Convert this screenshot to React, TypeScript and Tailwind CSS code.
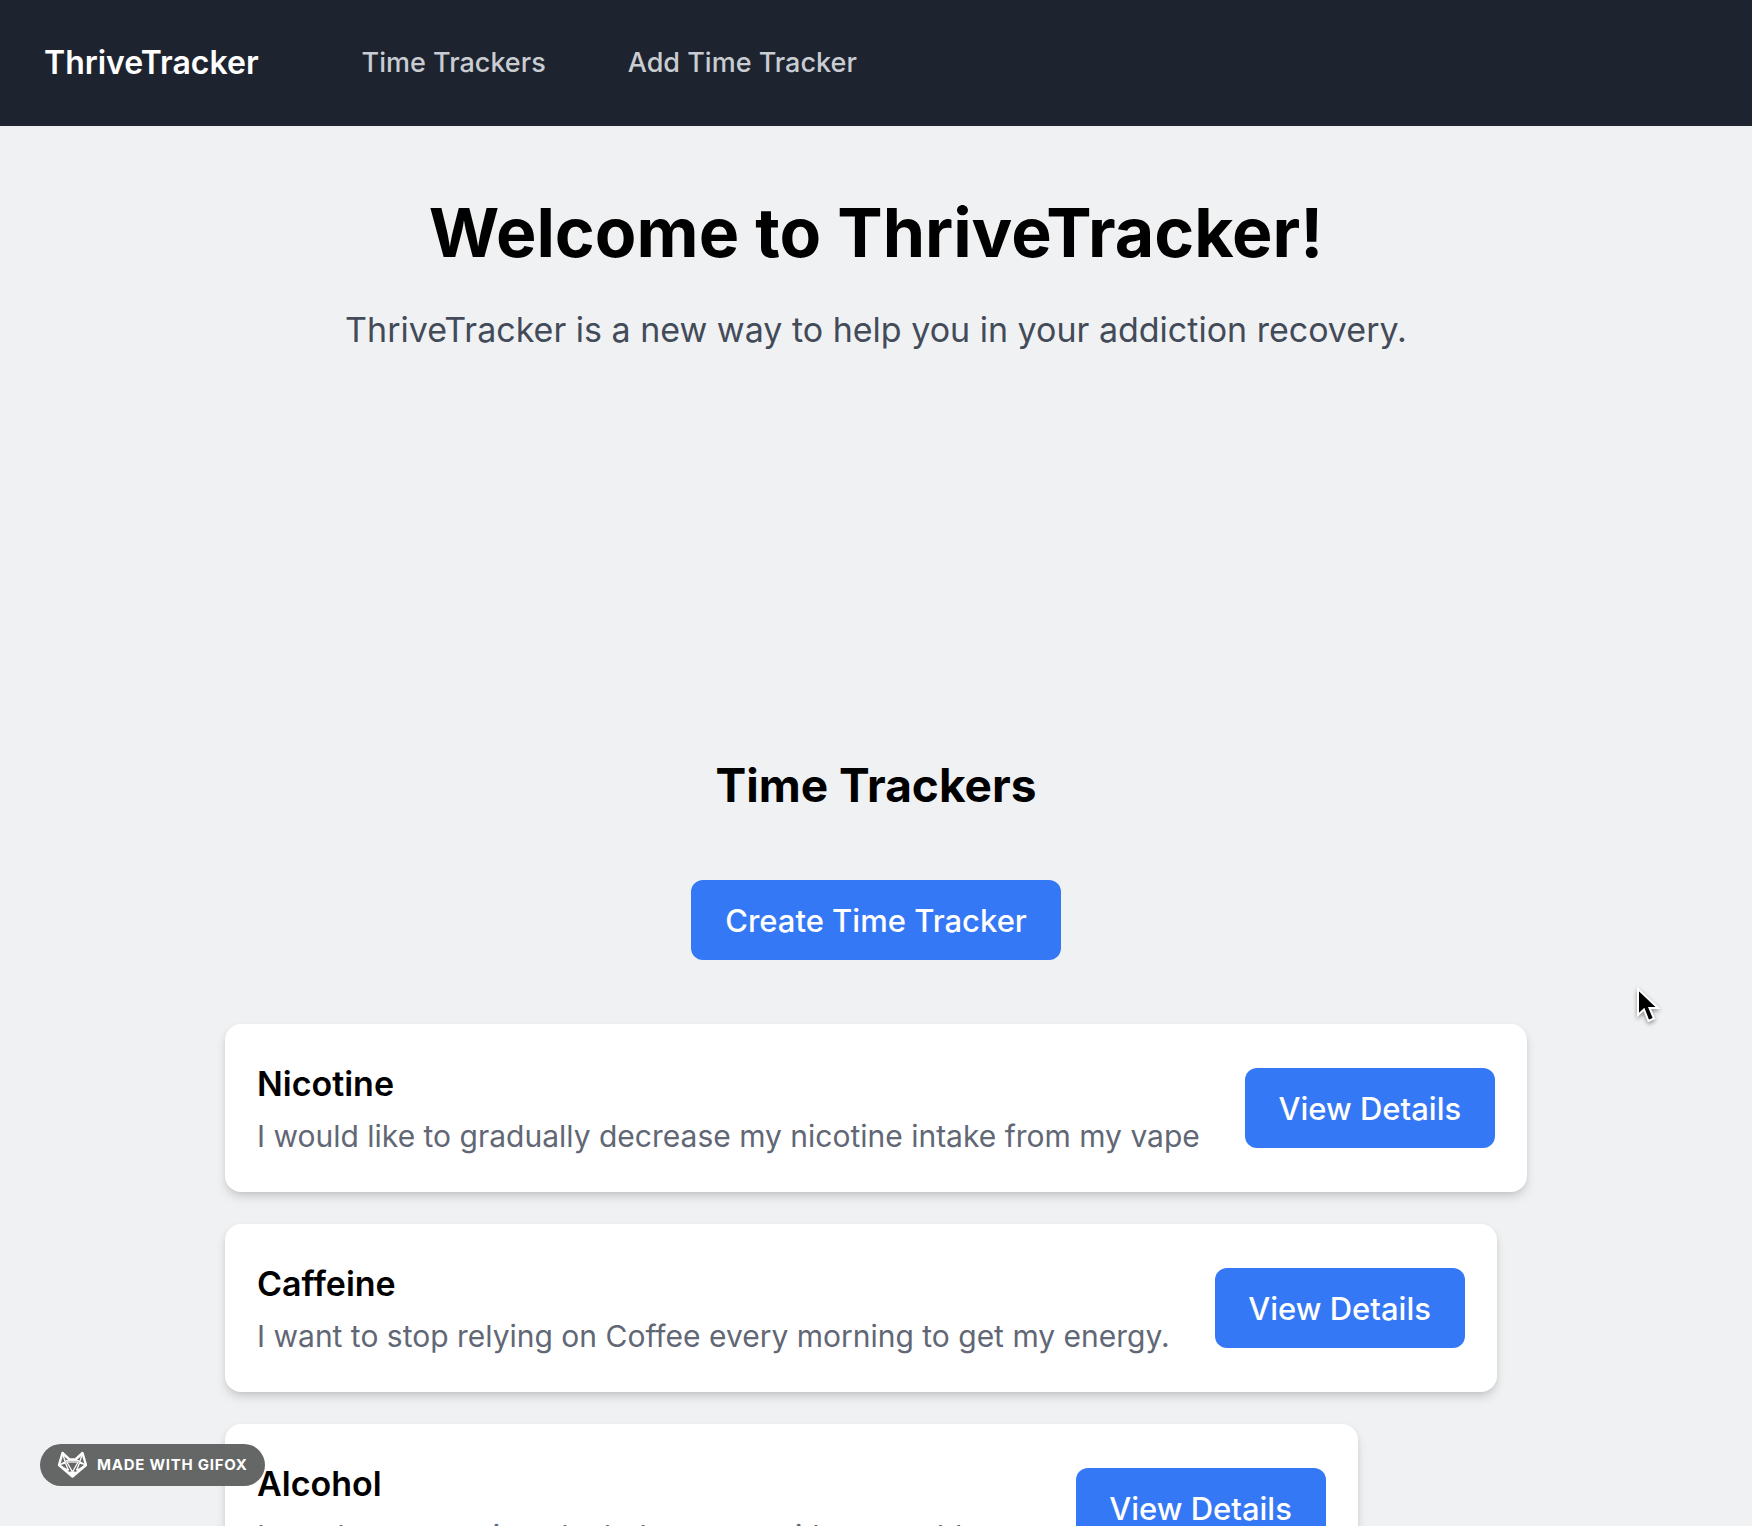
const trackers = [
  { name: "Nicotine", description: "I would like to gradually decrease my nicotine intake from my vape" },
  { name: "Caffeine", description: "I want to stop relying on Coffee every morning to get my energy." },
  { name: "Alcohol", description: "I need to stop using alcohol to cope with my problems." },
];

function Nav() {
  return (
    <nav className="flex h-[126px] items-center bg-[#1d2430] px-11">
      <a href="#home" className="mr-[103px] text-[32px] leading-10 font-semibold text-white">ThriveTracker</a>
      <ul className="flex gap-[82px] text-[27px] leading-10 font-medium text-[#c9ccd1]">
        <li><a href="#trackers">Time Trackers</a></li>
        <li><a href="#add">Add Time Tracker</a></li>
      </ul>
    </nav>
  );
}

function TrackerCard({ name, description }: { name: string; description: string }) {
  return (
    <li className="flex h-[168px] w-fit items-center gap-[45px] rounded-2xl bg-white px-8 shadow-[0_6px_12px_-2px_rgba(0,0,0,0.16),0_2px_6px_-1px_rgba(0,0,0,0.08)]">
      <div className="whitespace-nowrap">
        <h3 className="text-[34px] leading-[56px] font-semibold">{name}</h3>
        <p className="text-[30px] leading-[48px] text-[#616775]">{description}</p>
      </div>
      <button type="button" className="h-20 min-w-[250px] shrink-0 rounded-xl bg-[#3578f6] px-8 pt-0.5 text-[31px] font-medium text-white">View Details</button>
    </li>
  );
}

function FoxLogo() {
  return (
    <svg viewBox="0 0 30 28" className="h-7 w-[30px]" fill="none" stroke="white" strokeLinejoin="round" aria-hidden="true">
      <path fill="#c4c5c5" stroke="none" d="M9 9H22L20 12H11Z" />
      <path strokeWidth="2.4" d="M5.500 2 12.500 8.500H18.500L25.500 2 29 14 15.500 25.500 2 14Z" />
      <path strokeWidth="1.300" d="M5.500 2 8.500 12 2 14 12.500 8.500M25.500 2 22.500 12 29 14 18.500 8.500M9 9.500 15.500 21 22 9.500M8.500 12 11.500 19.500M22.500 12 19.500 19.500M2 14 11.500 19.500M29 14 19.500 19.500" />
      <path fill="white" strokeWidth="1" d="M12.500 21H18.500L15.500 26Z" />
    </svg>
  );
}

export default function App() {
  return (
    <div className="relative h-screen overflow-hidden bg-[#f0f1f3] font-['Inter',sans-serif] text-black">
      <Nav />
      <main>
        <header className="pt-[64px] text-center">
          <h1 className="text-[68px] leading-[84px] font-bold">Welcome to ThriveTracker!</h1>
          <p className="mt-8 text-[34px] leading-[48px] text-[#434b59]">ThriveTracker is a new way to help you in your addiction recovery.</p>
        </header>
        <section className="mt-[400px] flex flex-col items-center">
          <h2 className="text-[46px] leading-[62px] font-bold">Time Trackers</h2>
          <button type="button" className="mt-16 h-20 min-w-[370px] rounded-xl bg-[#3578f6] px-8 pt-0.5 text-[31px] font-medium text-white">Create Time Tracker</button>
          <ul className="mt-16 flex w-full max-w-[1302px] flex-col gap-8">
            {trackers.map((t) => <TrackerCard key={t.name} {...t} />)}
          </ul>
        </section>
      </main>
      <div className="absolute bottom-10 left-10 flex h-[42px] items-center gap-2.5 rounded-full bg-[#656766] px-[17px] text-white">
        <FoxLogo />
        <span className="text-[15px] font-bold tracking-wider whitespace-nowrap">MADE WITH GIFOX</span>
      </div>
      <svg viewBox="0 0 24 38" className="absolute top-[987px] left-[1636px] h-[38px] w-6 drop-shadow-[0_2px_2px_rgba(0,0,0,0.4)]" aria-hidden="true">
        <path d="M2 2V28L8 22.500 12.500 34 18 31.500 13.500 21H22Z" fill="black" stroke="white" strokeWidth="2" />
      </svg>
    </div>
  );
}
